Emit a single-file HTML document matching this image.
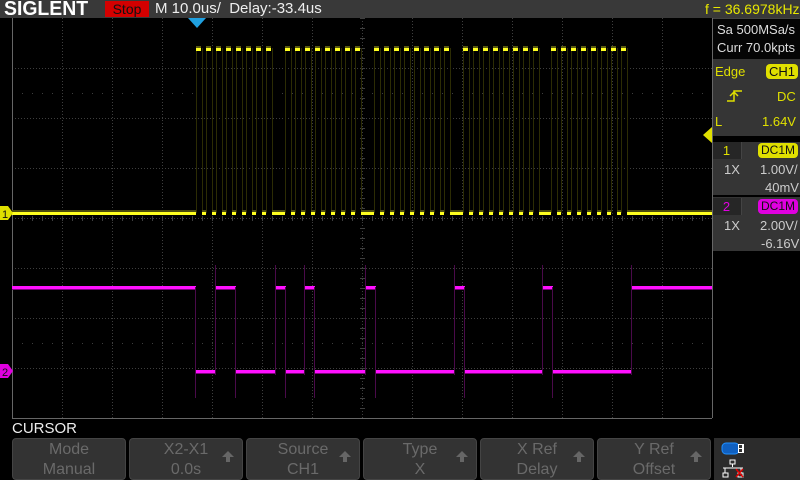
<!DOCTYPE html>
<html><head><meta charset="utf-8"><style>
*{margin:0;padding:0;box-sizing:border-box}
body{width:800px;height:480px;background:#000;position:relative;overflow:hidden;font-family:"Liberation Sans",sans-serif}
.a{position:absolute;white-space:nowrap}
.btn{position:absolute;top:438px;height:42px;width:114px;background:#333;border:1px solid #444;border-radius:4px;color:#6a6a6a;font-size:16px;text-align:center;line-height:20px;padding-top:1px}
.btn .ar{position:absolute;right:8px;top:12px;width:0;height:0;border-left:6px solid transparent;border-right:6px solid transparent;border-bottom:6px solid #666}
.btn .ar:after{content:"";position:absolute;left:-2px;top:6px;width:4px;height:5px;background:#666}
.r{font-size:13px}
</style></head><body>
<div class="a" style="left:0;top:0;width:800px;height:18px;background:#393939"></div>
<div class="a" style="left:4px;top:-2px;font-size:20px;font-weight:bold;color:#fff;letter-spacing:0px;transform:scaleX(0.97);transform-origin:left">SIGLENT</div>
<div class="a" style="left:105px;top:1px;width:44px;height:16px;background:#d40000;color:#111;font-size:14px;line-height:16px;text-align:center">Stop</div>
<div class="a" style="left:155px;top:0;font-size:15px;color:#eee;line-height:18px">M 10.0us/&nbsp; Delay:-33.4us</div>
<div class="a" style="left:705px;top:0;font-size:14px;color:#e8e800;line-height:18px">f = 36.6978kHz</div>
<div class="a" style="left:712px;top:18px;width:88px;height:41px;background:#050505;border-left:1px solid #444;border-top:1px solid #444"></div>
<div class="a r" style="left:717px;top:22px;color:#ddd">Sa 500MSa/s</div>
<div class="a r" style="left:717px;top:40px;color:#ddd">Curr 70.0kpts</div>
<div class="a" style="left:712px;top:59px;width:88px;height:77px;background:#353535"></div>
<div class="a r" style="left:715px;top:64px;color:#e0e000">Edge</div>
<div class="a" style="left:766px;top:64px;width:32px;height:15px;background:#e0e000;border-radius:4px;color:#111;font-size:13px;line-height:15px;text-align:center">CH1</div>
<svg class="a" style="left:725px;top:88px" width="20" height="16"><path d="M2 13H9V3H17M5 8L9 4L13 8" stroke="#e0e000" stroke-width="1.5" fill="none"/></svg>
<div class="a r" style="left:777px;top:89px;color:#e0e000">DC</div>
<div class="a r" style="left:715px;top:114px;color:#e0e000">L</div>
<div class="a r" style="left:762px;top:114px;color:#e0e000">1.64V</div>
<div class="a" style="left:712px;top:142px;width:88px;height:53px;background:#353535"></div>
<div class="a" style="left:712px;top:142px;width:30px;height:17px;background:#262626;border-right:1px solid #444;color:#e0e000;font-size:13px;text-align:center;line-height:17px">1</div>
<div class="a" style="left:758px;top:143px;width:40px;height:15px;background:#e0e000;border-radius:4px;color:#111;font-size:12px;line-height:15px;text-align:center">DC1M</div>
<div class="a r" style="left:724px;top:162px;color:#ccc">1X</div>
<div class="a r" style="left:760px;top:162px;color:#ccc">1.00V/</div>
<div class="a r" style="left:765px;top:180px;color:#ccc">40mV</div>
<div class="a" style="left:712px;top:197px;width:88px;height:54px;background:#353535"></div>
<div class="a" style="left:712px;top:198px;width:30px;height:17px;background:#262626;border-right:1px solid #444;color:#e000e0;font-size:13px;text-align:center;line-height:17px">2</div>
<div class="a" style="left:758px;top:199px;width:40px;height:15px;background:#e000e0;border-radius:4px;color:#111;font-size:12px;line-height:15px;text-align:center">DC1M</div>
<div class="a r" style="left:724px;top:218px;color:#ccc">1X</div>
<div class="a r" style="left:760px;top:218px;color:#ccc">2.00V/</div>
<div class="a r" style="left:761px;top:236px;color:#ccc">-6.16V</div>
<svg class="a" style="left:0;top:0" width="800" height="480">
<g id="grid" stroke="#3e3e3e" stroke-width="1" fill="none"></g>
<line x1="12.5" y1="18" x2="12.5" y2="418" stroke="#666"/>
<line x1="12" y1="418.5" x2="712" y2="418.5" stroke="#666"/>
<line x1="712.5" y1="18" x2="712.5" y2="418" stroke="#666"/>
<g id="yw"></g><g id="mw"></g>
<polygon points="188,18 206,18 197,28" fill="#1fa0e0"/>
<polygon points="703,135 712,127 712,143" fill="#e0e000"/>
<polygon points="0,206 8,206 13,213 8,220 0,220" fill="#e0e000"/>
<text x="2" y="218" font-size="11" font-family="Liberation Sans" fill="#111">1</text>
<polygon points="0,364 8,364 13,371 8,378 0,378" fill="#e000e0"/>
<text x="2" y="376" font-size="11" font-family="Liberation Sans" fill="#111">2</text>
</svg>
<div class="a" style="left:12px;top:420px;font-size:15px;color:#eee">CURSOR</div>
<div class="btn" style="left:12px">Mode<br>Manual</div>
<div class="btn" style="left:129px">X2-X1<br>0.0s<span class="ar"></span></div>
<div class="btn" style="left:246px">Source<br>CH1<span class="ar"></span></div>
<div class="btn" style="left:363px">Type<br>X<span class="ar"></span></div>
<div class="btn" style="left:480px">X Ref<br>Delay<span class="ar"></span></div>
<div class="btn" style="left:597px">Y Ref<br>Offset<span class="ar"></span></div>
<div class="a" style="left:714px;top:438px;width:86px;height:42px;background:#2c2c2c"></div>
<svg class="a" style="left:720px;top:441px" width="30" height="38">
<rect x="2" y="2" width="17" height="11" rx="4" fill="#1060c0" stroke="#2090ff"/>
<rect x="18" y="3" width="6" height="9" fill="#fff"/><rect x="19" y="4" width="3" height="3" fill="#333"/><rect x="19" y="8" width="3" height="3" fill="#333"/>
<path d="M10 19h5v4h-5zM12.5 23v3M3 27h20M5 27v5M21 27v5M3 32h5v4H3zM18 32h5v4h-5z" stroke="#fff" fill="none"/>
<path d="M16 28l7 8M23 28l-7 8" stroke="#e00000" stroke-width="1.5"/>
</svg>
<script>
var ns="http://www.w3.org/2000/svg";
function el(p,t,a){var e=document.createElementNS(ns,t);for(var k in a)e.setAttribute(k,a[k]);p.appendChild(e);return e;}
var g=document.getElementById('grid');
for(var x=62;x<712;x+=50) el(g,'line',{x1:x+.5,y1:18,x2:x+.5,y2:418,'stroke-dasharray':'1 2'});
for(var y=68;y<418;y+=50) el(g,'line',{x1:12,y1:y+.5,x2:712,y2:y+.5,'stroke-dasharray':'1 2'});
[93,343].forEach(function(y){el(g,'line',{x1:12,y1:y+.5,x2:712,y2:y+.5,'stroke-dasharray':'1 9'});});
for(var x=12;x<712;x+=10) el(g,'line',{x1:x+.5,y1:216,x2:x+.5,y2:221});
for(var y=18;y<418;y+=10) el(g,'line',{x1:360,y1:y+.5,x2:365,y2:y+.5});
var yw=document.getElementById('yw');
var groups=[196,285,374,463,551];
var lowSeg=[[12,196]];
groups.forEach(function(s,gi){
 for(var i=0;i<8;i++){var x=s+i*10;
  el(yw,'line',{x1:x+.5,y1:48,x2:x+.5,y2:213,stroke:'#2c2c04'});
  el(yw,'line',{x1:x+6.5,y1:48,x2:x+6.5,y2:213,stroke:'#2c2c04'});
  el(yw,'rect',{x:x,y:46,width:5,height:2,fill:'#5a5a10'});
  el(yw,'rect',{x:x,y:48,width:5,height:3,fill:'#ffff20'});
  if(i<7) lowSeg.push([x+6,x+10]);
 }
 var e=s+76, n=gi<4?groups[gi+1]:712; lowSeg.push([e,n]);
});
lowSeg.forEach(function(s){el(yw,'rect',{x:s[0],y:212,width:s[1]-s[0],height:3,fill:'#ffff20'});el(yw,'rect',{x:s[0],y:210,width:s[1]-s[0],height:2,fill:'#4a4a10'});});
var mw=document.getElementById('mw');
var segs=[[12,196,1],[196,216,0],[216,236,1],[236,276,0],[276,286,1],[286,305,0],[305,315,1],[315,366,0],[366,376,1],[376,455,0],[455,465,1],[465,543,0],[543,553,1],[553,632,0],[632,712,1]];
segs.forEach(function(s,i){var y=s[2]?286:370;
 el(mw,'rect',{x:s[0],y:y,width:s[1]-s[0],height:3,fill:'#ff10ff'});
 el(mw,'rect',{x:s[0],y:y+3,width:s[1]-s[0],height:1,fill:'#800080'});
 if(i>0){var x=s[0]; el(mw,'line',{x1:x-.5,y1:s[2]?265:287,x2:x-.5,y2:s[2]?375:398,stroke:'#4a0a4a'});}
});
</script>
</body></html>
